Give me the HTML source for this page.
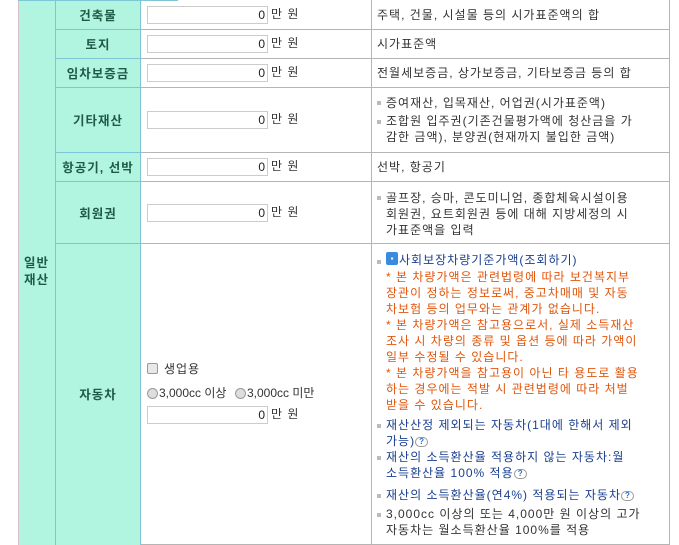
<!DOCTYPE html>
<html><head><meta charset="utf-8"><style>
*{margin:0;padding:0;box-sizing:border-box}
body{width:679px;height:545px;background:#fff;position:relative;overflow:hidden;font-family:"Liberation Sans","Noto Sans CJK KR","NanumGothic",sans-serif;font-size:12px;color:#333}
.a{position:absolute}
.m{background:#b1f5e0}
.h{font-weight:bold;color:#1f5a45;text-align:center;font-size:12.5px;letter-spacing:1px}
.in{position:absolute;left:147px;width:121px;height:18px;border:1px solid #ccc;background:#fff;text-align:right;padding-right:2px;line-height:16px;font-size:12px;color:#222}
.u{position:absolute;left:271px;font-size:12px;color:#333;letter-spacing:1px}
.t{position:absolute;left:377px;font-size:12px;line-height:16px;color:#333;letter-spacing:1px;white-space:nowrap}
.b{position:absolute;width:4px;height:4px;background:#bbb}
.r{color:#e0560d}
.bl{color:#1a3f8f}
.q{display:inline-block;width:13px;height:10px;border:1px solid #999;border-radius:5px;font-size:8px;line-height:8px;text-align:center;color:#2a6fcf;vertical-align:1px;font-weight:bold;background:#fff;letter-spacing:0}
</style></head><body>
<div class="a m" style="left:18px;top:0;width:37px;height:545px;border-left:1px solid #d7c2cc"></div>
<div class="a m" style="left:55px;top:0;width:86px;height:545px;border-left:1px solid #7ec6d6;border-right:1px solid #7ec6d6"></div>
<div class="a" style="left:669px;top:0;width:1px;height:545px;background:#b5b5b5"></div>
<div class="a" style="left:371px;top:0;width:1px;height:545px;background:#b5b5b5"></div>
<div class="a" style="left:18px;top:0;width:160px;height:1px;background:#7ec6d6"></div>
<div class="a" style="left:55px;top:29px;width:86px;height:1px;background:#7ec6d6"></div>
<div class="a" style="left:141px;top:29px;width:529px;height:1px;background:#b5b5b5"></div>
<div class="a" style="left:55px;top:58px;width:86px;height:1px;background:#7ec6d6"></div>
<div class="a" style="left:141px;top:58px;width:529px;height:1px;background:#b5b5b5"></div>
<div class="a" style="left:55px;top:87px;width:86px;height:1px;background:#7ec6d6"></div>
<div class="a" style="left:141px;top:87px;width:529px;height:1px;background:#b5b5b5"></div>
<div class="a" style="left:55px;top:152px;width:86px;height:1px;background:#7ec6d6"></div>
<div class="a" style="left:141px;top:152px;width:529px;height:1px;background:#b5b5b5"></div>
<div class="a" style="left:55px;top:181px;width:86px;height:1px;background:#7ec6d6"></div>
<div class="a" style="left:141px;top:181px;width:529px;height:1px;background:#b5b5b5"></div>
<div class="a" style="left:55px;top:243px;width:86px;height:1px;background:#7ec6d6"></div>
<div class="a" style="left:141px;top:243px;width:529px;height:1px;background:#b5b5b5"></div>
<div class="a" style="left:141px;top:544px;width:529px;height:1px;background:#b5b5b5"></div>
<div class="a h" style="left:18px;top:255px;width:37px;line-height:17px">일반<br>재산</div>
<div class="a h" style="left:55px;top:5px;width:86px">건축물</div>
<div class="a h" style="left:55px;top:34px;width:86px">토지</div>
<div class="a h" style="left:55px;top:63px;width:86px">임차보증금</div>
<div class="a h" style="left:55px;top:110px;width:86px">기타재산</div>
<div class="a h" style="left:55px;top:157px;width:86px">항공기, 선박</div>
<div class="a h" style="left:55px;top:203px;width:86px">회원권</div>
<div class="a h" style="left:55px;top:384px;width:86px">자동차</div>
<div class="in" style="top:6px">0</div><div class="u" style="top:5px">만 원</div>
<div class="in" style="top:35px">0</div><div class="u" style="top:34px">만 원</div>
<div class="in" style="top:64px">0</div><div class="u" style="top:63px">만 원</div>
<div class="in" style="top:111px">0</div><div class="u" style="top:110px">만 원</div>
<div class="in" style="top:158px">0</div><div class="u" style="top:157px">만 원</div>
<div class="in" style="top:204px">0</div><div class="u" style="top:203px">만 원</div>
<div class="a" style="left:147px;top:363px;width:11px;height:11px;border:1px solid #999;background:#e8e8e8;border-radius:2px"></div>
<div class="a" style="left:164px;top:360px;letter-spacing:1px">생업용</div>
<div class="a" style="left:147px;top:388px;width:11px;height:11px;border:1px solid #999;background:#ddd;border-radius:50%"></div>
<div class="a" style="left:159px;top:384px">3,000cc 이상</div>
<div class="a" style="left:235px;top:388px;width:11px;height:11px;border:1px solid #999;background:#ddd;border-radius:50%"></div>
<div class="a" style="left:247px;top:384px">3,000cc 미만</div>
<div class="in" style="top:406px">0</div><div class="u" style="top:405px">만 원</div>
<div class="t" style="top:7px">주택, 건물, 시설물 등의 시가표준액의 합</div>
<div class="t" style="top:36px">시가표준액</div>
<div class="t" style="top:65px">전월세보증금, 상가보증금, 기타보증금 등의 합</div>
<div class="b" style="left:377px;top:101px"></div>
<div class="t" style="left:386px;top:95px">증여재산, 입목재산, 어업권(시가표준액)</div>
<div class="b" style="left:377px;top:120px"></div>
<div class="t" style="left:386px;top:113px">조합원 입주권(기존건물평가액에 청산금을 가<br>감한 금액), 분양권(현재까지 불입한 금액)</div>
<div class="t" style="top:159px">선박, 항공기</div>
<div class="b" style="left:377px;top:196px"></div>
<div class="t" style="left:386px;top:190px">골프장, 승마, 콘도미니엄, 종합체육시설이용<br>회원권, 요트회원권 등에 대해 지방세정의 시<br>가표준액을 입력</div>
<div class="b" style="left:377px;top:260px"></div>
<div class="a" style="left:386px;top:252px;width:12px;height:13px;background:#3a8be0;border-radius:2px;color:#fff;font-size:8px;text-align:center;line-height:13px">▪</div>
<div class="t bl" style="left:399px;top:252px">사회보장차량기준가액(조회하기)</div>
<div class="t r" style="left:386px;top:269px">* 본 차량가액은 관련법령에 따라 보건복지부<br>장관이 정하는 정보로써, 중고차매매 및 자동<br>차보험 등의 업무와는 관계가 없습니다.<br>* 본 차량가액은 참고용으로서, 실제 소득재산<br>조사 시 차량의 종류 및 옵션 등에 따라 가액이<br>일부 수정될 수 있습니다.<br>* 본 차량가액을 참고용이 아닌 타 용도로 활용<br>하는 경우에는 적발 시 관련법령에 따라 처벌<br>받을 수 있습니다.</div>
<div class="b" style="left:377px;top:424px"></div>
<div class="t bl" style="left:386px;top:417px">재산산정 제외되는 자동차(1대에 한해서 제외<br>가능)<span class="q">?</span></div>
<div class="b" style="left:377px;top:456px"></div>
<div class="t bl" style="left:386px;top:449px">재산의 소득환산율 적용하지 않는 자동차:월<br>소득환산율 100% 적용<span class="q">?</span></div>
<div class="b" style="left:377px;top:494px"></div>
<div class="t bl" style="left:386px;top:487px">재산의 소득환산율(연4%) 적용되는 자동차<span class="q">?</span></div>
<div class="b" style="left:377px;top:513px"></div>
<div class="t" style="left:386px;top:506px">3,000cc 이상의 또는 4,000만 원 이상의 고가<br>자동차는 월소득환산율 100%를 적용</div>
</body></html>
